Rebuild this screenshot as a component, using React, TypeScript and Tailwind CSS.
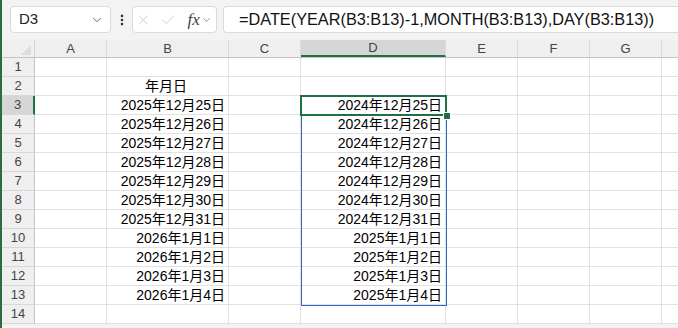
import React from "react";
import { ChevronDown, X, Check, EllipsisVertical } from "lucide-react";

const cols = [
    { key: "A", w: "w-[72px]" },
    { key: "B", w: "w-[122px]" },
    { key: "C", w: "w-[72px]" },
    { key: "D", w: "w-[145px]" },
    { key: "E", w: "w-[72px]" },
    { key: "F", w: "w-[72px]" },
    { key: "G", w: "w-[72px]" },
    { key: "H", w: "w-[72px]" },
];

const colB = ["", "年月日", "2025年12月25日", "2025年12月26日", "2025年12月27日", "2025年12月28日", "2025年12月29日", "2025年12月30日", "2025年12月31日", "2026年1月1日", "2026年1月2日", "2026年1月3日", "2026年1月4日", ""];
const colD = ["", "", "2024年12月25日", "2024年12月26日", "2024年12月27日", "2024年12月28日", "2024年12月29日", "2024年12月30日", "2024年12月31日", "2025年1月1日", "2025年1月2日", "2025年1月3日", "2025年1月4日", ""];

const font = "font-['Liberation_Sans','Noto_Sans_CJK_JP',sans-serif]";

const App: React.FC = () => {
    return (
        <div className={`w-[678px] h-[328px] overflow-hidden bg-[#f3f3f3] ${font} border-l-2 border-[#2f6b40]`}>
            {/* 数式バー */}
            <div className="h-[40px] flex items-start pt-[6px] pl-[8px]">
                <div className="w-[101px] shrink-0 h-[27px] bg-white border border-[#dadada] rounded-[4px] flex items-center justify-between pl-[8px] pr-[6px]">
                    <span className="text-[15px] text-[#222]">D3</span>
                    <ChevronDown className="w-[14px] h-[14px] text-[#555]" strokeWidth={1.5} />
                </div>
                <div className="w-[21px] shrink-0 h-[27px] flex items-center justify-center">
                    <EllipsisVertical className="w-[14px] h-[14px] text-[#333]" strokeWidth={2.5} />
                </div>
                <div className="w-[85px] shrink-0 h-[27px] bg-white border border-[#dadada] rounded-[4px] flex items-center pl-[2px] pr-[4px]">
                    <X className="w-[18px] h-[18px] text-[#c6c6c6]" strokeWidth={1.2} />
                    <Check className="w-[18px] h-[18px] text-[#c6c6c6] ml-[8px]" strokeWidth={1.2} />
                    <span className="ml-[11px] font-['Liberation_Serif',serif] italic text-[17px] text-[#444] leading-none">fx</span>
                    <ChevronDown className="w-[12px] h-[12px] text-[#666] ml-[1px]" strokeWidth={1.5} />
                </div>
                <div className="flex-1 ml-[6px] h-[27px] bg-white border border-[#dadada] rounded-l-[4px] border-r-0 flex items-center pl-[15px] overflow-hidden">
                    <span className="text-[16.3px] text-[#111] whitespace-nowrap">=DATE(YEAR(B3:B13)-1,MONTH(B3:B13),DAY(B3:B13))</span>
                </div>
            </div>

            {/* シート */}
            <div className="relative">
                {/* 列見出し */}
                <div className="flex h-[18px] border-b border-[#c4c4c4]">
                    <div className="w-[33px] shrink-0 relative border-r border-[#d4d4d4] bg-[#efefef]">
                        <div className="absolute right-[3px] bottom-[2px] w-0 h-0 border-l-[10px] border-l-transparent border-b-[10px] border-b-[#dcdcdc]" />
                    </div>
                    {cols.map((c) => (
                        <div
                            key={c.key}
                            className={`${c.w} shrink-0 flex items-center justify-center text-[13px] text-[#444] border-r border-[#dcdcdc] ${c.key === "D" ? "bg-[#d6d6d6] border-b-2 border-b-[#1e7145]" : "bg-[#efefef]"}`}
                        >
                            {c.key === "H" ? "" : c.key}
                        </div>
                    ))}
                </div>

                {/* 行 */}
                {colB.map((b, i) => {
                    const row = i + 1;
                    return (
                        <div key={row} className="flex h-[19px]">
                            <div
                                className={`w-[33px] shrink-0 flex items-center justify-center text-[13px] text-[#444] border-b border-[#d8d8d8] ${row === 3 ? "bg-[#d6d6d6] border-r-2 border-r-[#1e7145]" : "bg-[#efefef] border-r border-r-[#c4c4c4]"}`}
                            >
                                {row}
                            </div>
                            {cols.map((c) => {
                                let text = "";
                                let align = "justify-end";
                                if (c.key === "B") {
                                    text = b;
                                    if (row === 2) align = "justify-center";
                                }
                                if (c.key === "D") text = colD[i];
                                return (
                                    <div
                                        key={c.key}
                                        className={`${c.w} shrink-0 bg-white border-r border-b border-[#e1e1e1] flex items-center ${align} pr-[3px] text-[14px] text-black whitespace-nowrap`}
                                    >
                                        {text}
                                    </div>
                                );
                            })}
                        </div>
                    );
                })}

                {/* スピル範囲 */}
                <div className="absolute left-[299px] top-[56px] w-[146px] h-[210px] border border-[#2f69c2] pointer-events-none" />
                {/* 選択セル */}
                <div className="absolute left-[298px] top-[55px] w-[147px] h-[21px] border-2 border-[#1e7145] pointer-events-none" />
                <div className="absolute left-[441px] top-[72px] w-[6px] h-[6px] bg-[#1e7145] border border-white box-content" />
            </div>
        </div>
    );
};

export default App;
